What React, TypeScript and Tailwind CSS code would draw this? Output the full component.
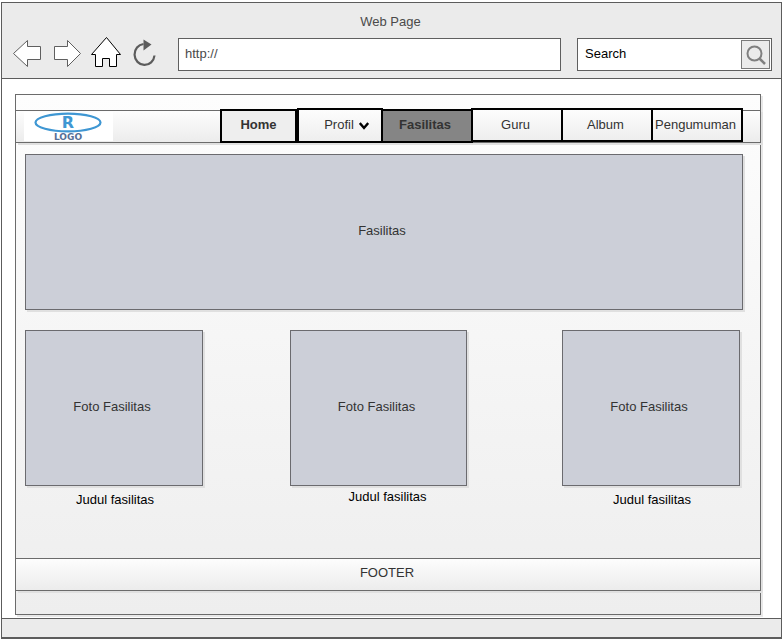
import React from "react";

const tabs = ["Guru", "Album", "Pengumuman"];

const photos = [
  { id: 1, box: "w-[178px]", caption: "mt-[6px] pl-[2px]" },
  { id: 2, box: "mr-2 w-[177px]", caption: "mt-[3px] pl-[18px]" },
  { id: 3, box: "w-[178px]", caption: "mt-[6px] pl-[2px]" },
];

const tabBase = "flex items-center justify-center border-2 border-black";
const tabLight = "bg-linear-to-b from-[#fdfdfd] to-[#eeeeee]";
const panel =
  "flex h-[156px] items-center justify-center border border-[#6b6b6f] bg-[#cccfd8] pb-[2px] pr-1 shadow-[2px_2px_0_0_#e0e0e0]";

function Toolbar() {
  return (
    <div className="flex h-[33px] items-center pl-[11px] pr-[9px]">
      <div className="mr-[21px] flex shrink-0 gap-[10px]">
        <button type="button" aria-label="Back">
          <svg className="block" width="30" height="33" fill="#fff" stroke="#5f5f5f">
            <path d="M.5 15.5 14.5 2.5V8.5H27.5V21.5H14.5V28.5Z" />
          </svg>
        </button>
        <button type="button" aria-label="Forward">
          <svg className="block" width="28" height="33" fill="#fff" stroke="#5f5f5f">
            <path d="M27.5 15.5 14.5 2.5V8.5H1.5V21.5H14.5V28.5Z" />
          </svg>
        </button>
        <button type="button" aria-label="Home page">
          <svg className="block overflow-visible" width="30" height="33" fill="#fff" stroke="#000">
            <path d="M15.5-.5.5 16.5H4.5V28.5H11.5V20.5H18.5V28.5H25.5V16.5H29.5Z" />
          </svg>
        </button>
        <button type="button" aria-label="Reload">
          <svg className="block" width="26" height="33" fill="none">
            <path d="M12.5 6A10 10.5 0 1 0 23.5 17.5" stroke="#5c5c5c" strokeWidth="2.2" />
            <path d="M12.5 1.5 20.5 6.5 12.5 12.5Z" fill="#5c5c5c" />
          </svg>
        </button>
      </div>
      <input
        type="text"
        aria-label="Address"
        defaultValue="http://"
        className="mr-4 h-[33px] min-w-0 flex-1 border border-[#5f5f5f] bg-white px-[6px] pb-[2px] text-[#4a4a4a] outline-none"
      />
      <form
        className="flex h-[33px] w-[195px] shrink-0 border border-[#5f5f5f] bg-white p-px"
        onSubmit={(e) => e.preventDefault()}
      >
        <input
          type="text"
          aria-label="Search"
          defaultValue="Search"
          className="min-w-0 flex-1 px-[6px] pb-[2px] text-black outline-none"
        />
        <button
          type="submit"
          aria-label="Run search"
          className="flex size-[29px] items-center justify-center border border-[#7a7a7a] bg-[#ebebeb]"
        >
          <svg width="20" height="20" fill="none" stroke="#808080">
            <circle cx="8.5" cy="8.5" r="7" strokeWidth="2" />
            <path d="M13.5 13.5 19 19" strokeWidth="2.5" />
          </svg>
        </button>
      </form>
    </div>
  );
}

function Logo() {
  return (
    <svg
      className="ml-2 block shrink-0 bg-white"
      width="89"
      height="29"
      role="img"
      aria-label="Logo"
      textAnchor="middle"
      fontFamily="'DejaVu Sans', sans-serif"
      fontWeight="700"
    >
      <ellipse cx="44" cy="10.5" rx="32.5" ry="8.8" fill="none" stroke="#3f97d3" strokeWidth="2.2" />
      <text x="44" y="16" fontSize="16" fill="#3f97d3">
        R
      </text>
      <text x="44" y="28" fontSize="9" fill="#566f97">
        LOGO
      </text>
    </svg>
  );
}

function NavBar() {
  return (
    <div className="-mr-px flex h-[33px] items-center justify-between border-y border-r border-[#6b6b6b] bg-linear-to-b from-[#fdfdfd] to-[#ececec] pr-[17px] shadow-[2px_2px_0_0_#e0e0e0]">
      <Logo />
      <nav className="-mt-[3px] flex shrink-0 items-end self-start text-[#333333]">
        <a href="#home" className={`${tabBase} h-[34px] w-[77px] bg-[#eeeeee] pb-[2px] font-bold`}>
          Home
        </a>
        <a
          href="#profil"
          className={`${tabBase} ${tabLight} h-[35px] w-[86px] gap-[5px] pb-[2px] pl-[13px]`}
        >
          Profil
          <svg className="mt-[2px]" width="10" height="8" fill="none" stroke="#000" strokeWidth="2.4">
            <path d="M.8 1 5 6 9.2 1" />
          </svg>
        </a>
        <a
          href="#fasilitas"
          aria-current="page"
          className={`${tabBase} -ml-[2px] h-[34px] w-[92px] bg-[#858585] pb-[2px] pr-1 font-bold`}
        >
          Fasilitas
        </a>
        {tabs.map((label) => (
          <a
            key={label}
            href={`#${label.toLowerCase()}`}
            className={`${tabBase} ${tabLight} -ml-[2px] mb-px h-[34px] w-[92px] pr-[3px]`}
          >
            {label}
          </a>
        ))}
      </nav>
    </div>
  );
}

export default function App() {
  return (
    <div className="flex min-h-screen flex-col bg-white px-px pt-[2px] font-['Liberation_Sans',Arial,sans-serif] text-[13px] leading-4">
      <div className="flex flex-1 flex-col border border-b-2 border-[#5c5c5c]">
        <header className="border-b border-[#5c5c5c] bg-[#ebebeb] pb-[7px]">
          <h1 className="flex h-[35px] items-center justify-center pr-[2px] pt-[2px] text-[#4a4a4a]">
            Web Page
          </h1>
          <Toolbar />
        </header>

        <div className="mb-[3px] ml-[13px] mr-5 mt-[15px] flex flex-1 flex-col border border-[#6b6b6b] bg-linear-to-b from-[#fdfdfd] to-[#eeeeee] pt-[15px] shadow-[2px_2px_0_0_#e8e8e8]">
          <NavBar />

          <main className="flex-1 pb-12 pl-[9px] pr-[17px] pt-[11px] text-[#333333]">
            <div className={panel}>Fasilitas</div>
            <div className="mt-5 flex justify-between pr-[3px]">
              {photos.map((photo) => (
                <figure key={photo.id} className={photo.box}>
                  <div className={panel}>Foto Fasilitas</div>
                  <figcaption className={`text-center text-black ${photo.caption}`}>
                    Judul fasilitas
                  </figcaption>
                </figure>
              ))}
            </div>
          </main>

          <footer className="-mr-px mb-[23px] flex h-[33px] items-center justify-center border-y border-r border-[#6b6b6b] bg-linear-to-b from-[#fdfdfd] to-[#ececec] pb-[3px] pr-[2px] text-[#333333] shadow-[2px_2px_0_0_#e0e0e0]">
            FOOTER
          </footer>
        </div>

        <div className="h-[19px] border-t border-[#5c5c5c] bg-[#ebebeb]" />
      </div>
    </div>
  );
}
